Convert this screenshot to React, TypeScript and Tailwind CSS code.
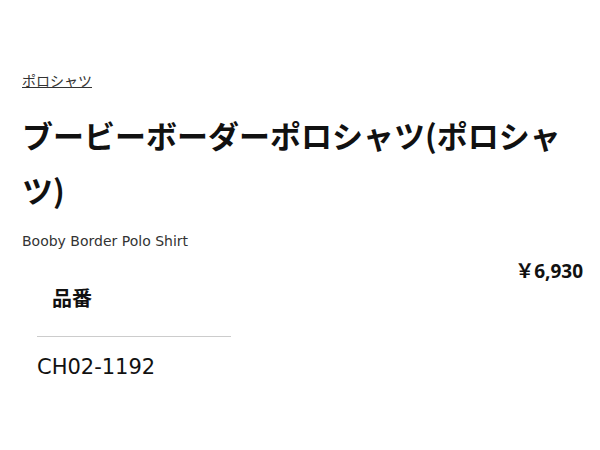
import React from "react";

export default function App() {
  return (
    <div className="w-[600px] h-[450px] bg-white text-[#111] overflow-hidden" style={{ fontFamily: '"DejaVu Sans", "Noto Sans CJK JP", sans-serif' }}>
      <div className="pt-[70px] px-[22px]">
        <a href="#" className="block w-max text-[14px] leading-[20px] text-[#333] underline" style={{ fontFamily: '"Noto Sans CJK JP", sans-serif' }}>
          ポロシャツ
        </a>
        <h1 className="mt-[17px] w-[556px] text-[31px] leading-[55px] font-bold text-[#111]" style={{ fontFamily: '"Noto Sans CJK JP", sans-serif' }}>
          ブービーボーダーポロシャツ(ポロシャツ)
        </h1>
        <p className="mt-[14px] text-[14px] leading-[20px] text-[#333]">Booby Border Polo Shirt</p>
        <div className="flex justify-end -mr-[5px] mt-[10px]">
          <span className="text-[19px] leading-[20px] font-bold text-[#111]" style={{ fontFamily: '"Open Sans", "Noto Sans CJK JP", sans-serif' }}>￥6,930</span>
        </div>
        <div className="w-[194px] ml-[15px]">
          <div className="mt-[3px] pl-[15px] text-[20px] leading-[28px] font-bold" style={{ fontFamily: '"Noto Sans CJK JP", sans-serif' }}>品番</div>
          <div className="mt-[24px] border-t border-[#cccccc]" />
          <div className="mt-[17px] text-[21px] leading-[26px] text-[#111]">CH02-1192</div>
        </div>
      </div>
    </div>
  );
}
